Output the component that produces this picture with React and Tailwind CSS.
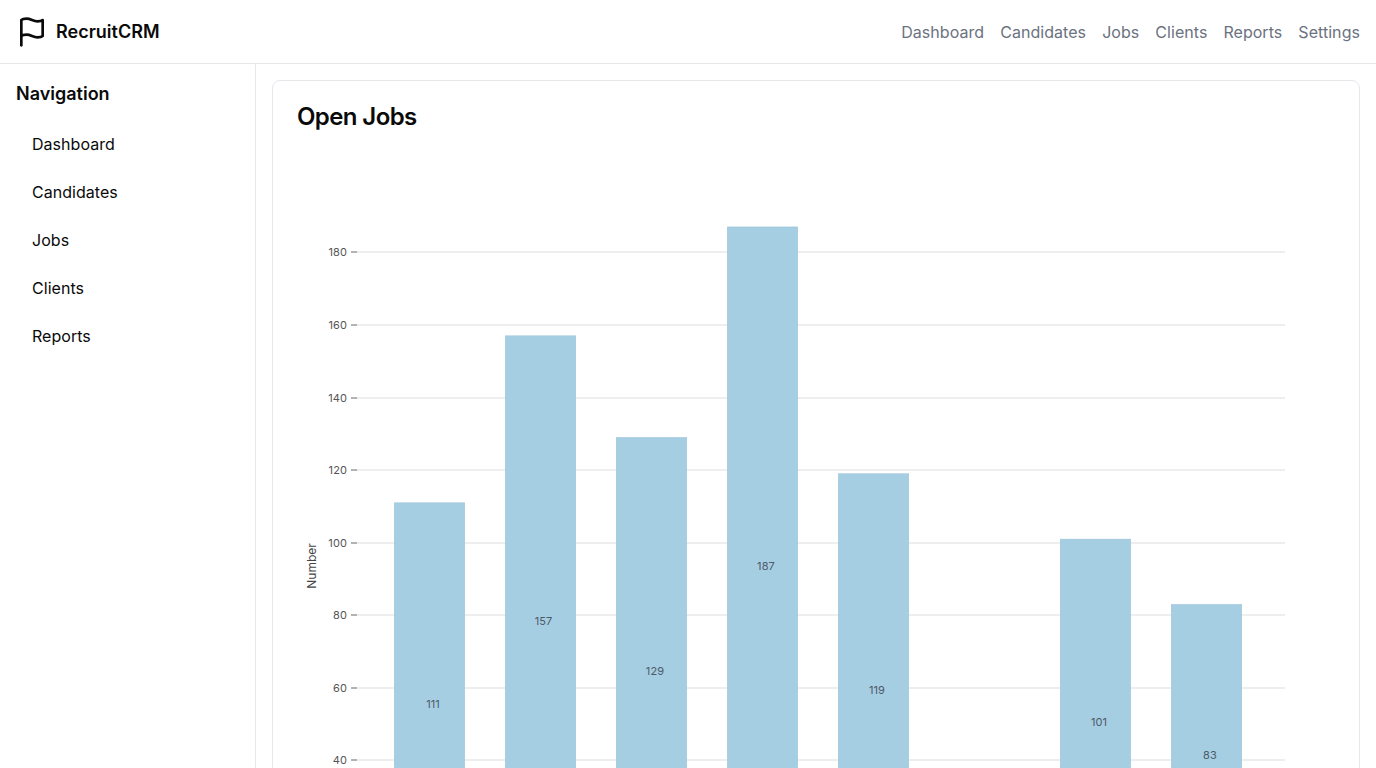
import React from "react";

const topNav = ["Dashboard", "Candidates", "Jobs", "Clients", "Reports", "Settings"];
const sideNav = ["Dashboard", "Candidates", "Jobs", "Clients", "Reports"];
const ticks = [
  [180, 252], [160, 325], [140, 398], [120, 470], [100, 543], [80, 615], [60, 688], [40, 760],
];
const bars = [
  { x: 394, v: 111, lx: 433, ly: 704 },
  { x: 505, v: 157, lx: 543.5, ly: 621 },
  { x: 616, v: 129, lx: 655, ly: 671 },
  { x: 727, v: 187, lx: 766, ly: 566 },
  { x: 838, v: 119, lx: 877, ly: 690 },
  { x: 1060, v: 101, lx: 1099, ly: 722 },
  { x: 1171, v: 83, lx: 1210, ly: 755 },
];
const y0 = 905.5;
const k = 3.63;

function Chart() {
  return (
    <svg className="block mt-2" width="1038" height="800" viewBox="297 137 1038 800">
      {ticks.map(([v, y]) => (
        <g key={v}>
          <line x1="357" x2="1285" y1={y} y2={y} stroke="#eeeeee" strokeWidth="2" />
          <line x1="351" x2="357" y1={y} y2={y} stroke="#666666" strokeWidth="1" />
          <text x="347" y={y + 4} textAnchor="end" fontSize="11" letterSpacing="0.1" fill="#555555">{v}</text>
        </g>
      ))}
      <text transform="translate(316 566) rotate(-90)" textAnchor="middle" fontSize="12" fill="#444444">Number</text>
      {bars.map((b) => (
        <g key={b.v}>
          <rect x={b.x + 0.25} y={y0 - b.v * k + 0.25} width="70.5" height={b.v * k} fill="#a6cee3" stroke="#98c0d6" strokeWidth="0.5" />
          <text x={b.lx} y={b.ly + 4} textAnchor="middle" fontSize="11" letterSpacing="0.1" fill="#4d5a68">{b.v}</text>
        </g>
      ))}
    </svg>
  );
}

export default function App() {
  return (
    <div className="h-screen overflow-hidden bg-white text-[#0a0a0a] font-['Inter',sans-serif]">
      <header className="h-16 border-b border-[#e5e7eb] flex items-center justify-between pl-4 pr-4">
        <div className="flex items-center gap-2">
          <svg width="32" height="32" viewBox="0 0 24 24" fill="none" stroke="currentColor" strokeWidth="2" strokeLinecap="round" strokeLinejoin="round">
            <path d="M4 15s1-1 4-1 5 2 8 2 4-1 4-1V3s-1 1-4 1-5-2-8-2-4 1-4 1z" />
            <line x1="4" y1="22" x2="4" y2="15" />
          </svg>
          <span className="text-lg font-semibold">RecruitCRM</span>
        </div>
        <nav className="flex items-center gap-4">
          {topNav.map((t) => (
            <a key={t} className="text-base tracking-[0.05px] text-[#6b7280]">{t}</a>
          ))}
        </nav>
      </header>
      <div className="flex">
        <aside className="w-64 shrink-0 border-r border-[#e5e7eb] p-4 h-[704px]">
          <h2 className="text-lg font-semibold mb-3">Navigation</h2>
          <ul>
            {sideNav.map((t) => (
              <li key={t} className="px-4 py-3 text-base tracking-[0.04px]">{t}</li>
            ))}
          </ul>
        </aside>
        <main className="flex-1 p-4 min-w-0">
          <section className="rounded-lg border border-[#e5e7eb] p-6">
            <h1 className="text-2xl font-semibold leading-none tracking-tight">Open Jobs</h1>
            <Chart />
          </section>
        </main>
      </div>
    </div>
  );
}
